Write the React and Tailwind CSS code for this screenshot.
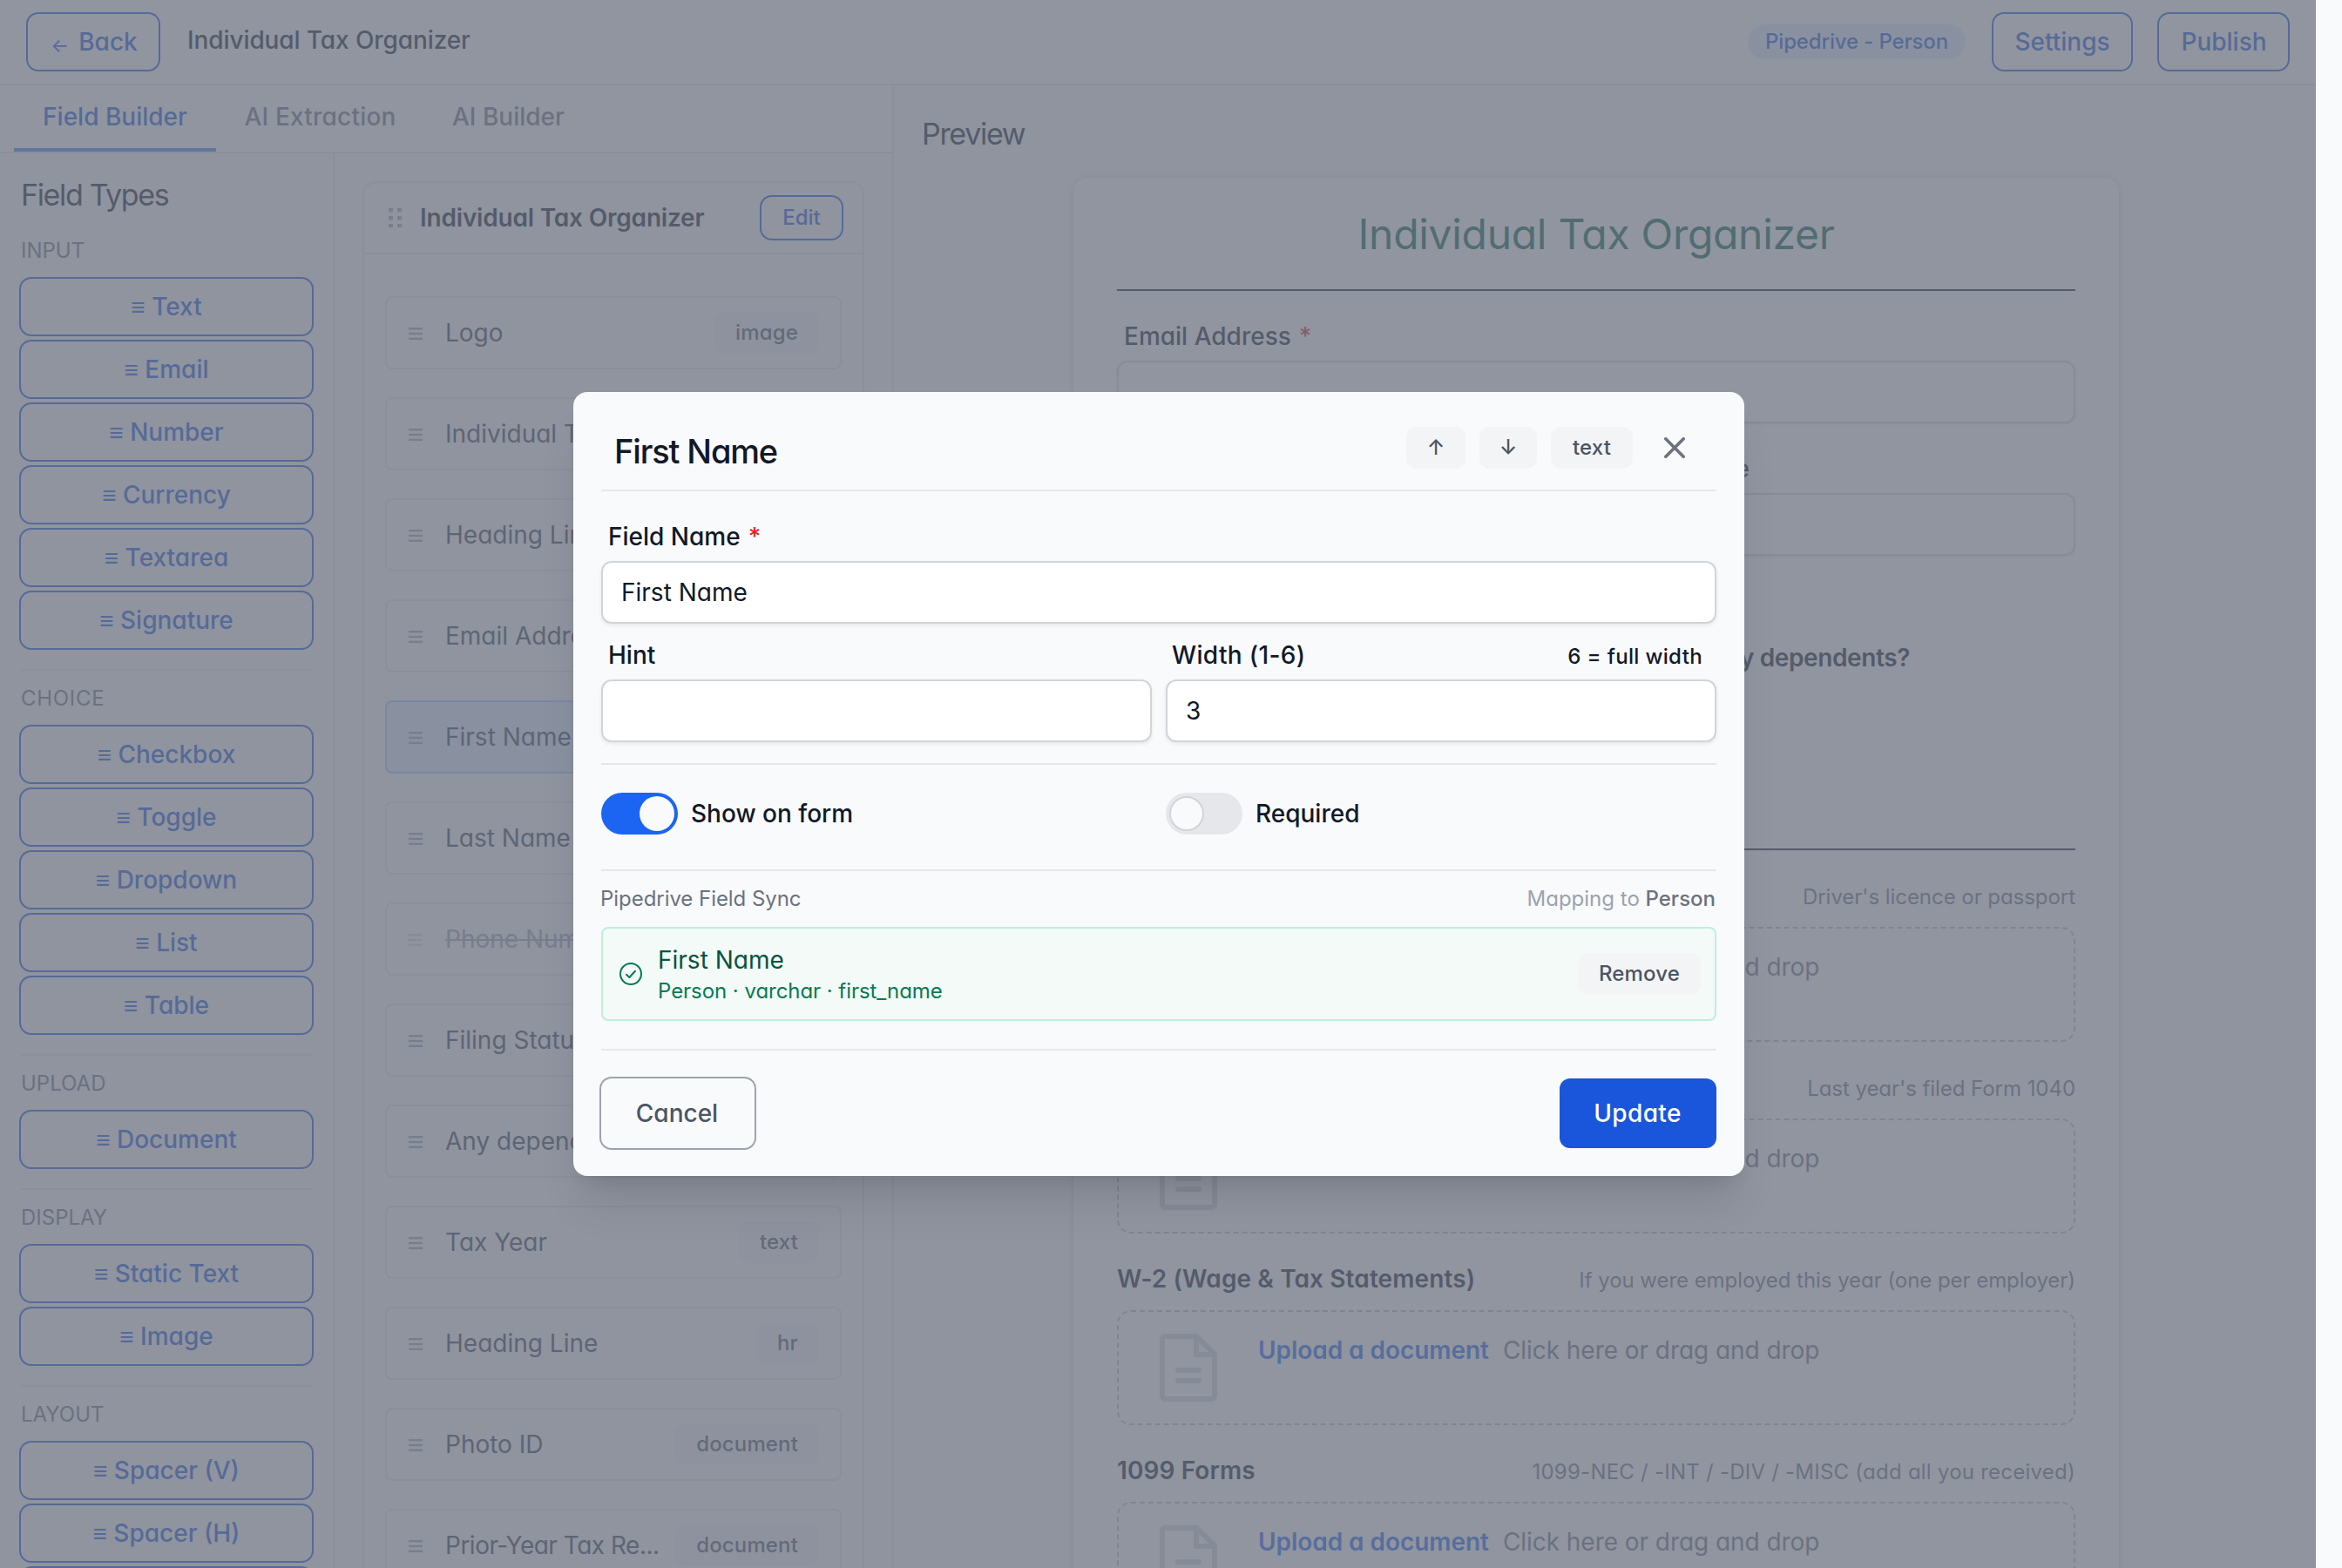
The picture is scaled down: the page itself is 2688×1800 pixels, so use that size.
import React from 'react';

const fieldGroups = [
  { title: 'INPUT', items: ['Text', 'Email', 'Number', 'Currency', 'Textarea', 'Signature'] },
  { title: 'CHOICE', items: ['Checkbox', 'Toggle', 'Dropdown', 'List', 'Table'] },
  { title: 'UPLOAD', items: ['Document'] },
  { title: 'DISPLAY', items: ['Static Text', 'Image'] },
  { title: 'LAYOUT', items: ['Spacer (V)', 'Spacer (H)', 'Divider'] },
];

const formFields = [
  { name: 'Logo', type: 'image' },
  { name: 'Individual Tax Organizer', type: 'text' },
  { name: 'Heading Line', type: 'hr' },
  { name: 'Email Address', type: 'email' },
  { name: 'First Name', type: 'text', active: true },
  { name: 'Last Name', type: 'text' },
  { name: 'Phone Number', type: 'text', hidden: true },
  { name: 'Filing Status', type: 'list' },
  { name: 'Any dependents?', type: 'toggle' },
  { name: 'Tax Year', type: 'text' },
  { name: 'Heading Line', type: 'hr' },
  { name: 'Photo ID', type: 'document' },
  { name: 'Prior-Year Tax Re...', type: 'document', long: true },
];

const uploads = [
  { label: 'Photo ID', hint: "Driver's licence or passport" },
  { label: 'Prior-Year Tax Return', hint: "Last year's filed Form 1040" },
  { label: 'W-2 (Wage & Tax Statements)', hint: 'If you were employed this year (one per employer)' },
  { label: '1099 Forms', hint: '1099-NEC / -INT / -DIV / -MISC (add all you received)', wide: true },
];

export default function App() {
  return (
    <div className="relative h-[1800px] w-[2688px] overflow-hidden bg-[#f9fafb] font-['Inter',sans-serif] text-[28px] leading-10 text-[#111928] [font-feature-settings:'cv11']">
      <div className="flex h-full w-[2658px] flex-col">
        <TopBar />
        <div className="flex min-h-0 flex-1">
          <div className="flex w-[1026px] shrink-0 flex-col border-r-2 border-[#e5e7eb]">
            <Tabs />
            <div className="flex min-h-0 flex-1">
              <Sidebar />
              <FieldList />
            </div>
          </div>
          <Preview />
        </div>
      </div>

      {/* Backdrop + modal */}
      <div className="absolute inset-y-0 left-0 flex w-[2658px] items-center justify-center bg-[#6b7280]/75 pl-0.5">
        <FieldModal />
      </div>
    </div>
  );
}

function TopBar() {
  return (
    <header className="flex h-[98px] shrink-0 items-center border-b-2 border-[#e5e7eb] bg-white pr-8 pl-8">
      <button className="flex h-16 w-[150px] items-center justify-center rounded-xl font-medium text-[#1a56db] ring-2 ring-[#1a56db]">
        <span className="mr-[11px] ml-0.5 pt-2 text-[22px] font-normal">←</span>Back
      </button>
      <h1 className="ml-[33px] pb-1 font-medium tracking-[-0.1px]">Individual Tax Organizer</h1>
      <span className="ml-auto flex h-10 w-[250px] items-center justify-center rounded-full bg-[#e1effe] text-2xl font-medium tracking-[-0.15px] text-[#1a56db]">
        Pipedrive - Person
      </span>
      <button className="ml-8 h-16 w-[158px] rounded-xl font-medium text-[#1a56db] ring-2 ring-[#1a56db]">Settings</button>
      <button className="ml-8 h-16 w-[148px] rounded-xl pl-px font-medium text-[#1a56db] ring-2 ring-[#1a56db]">Publish</button>
    </header>
  );
}

function Tabs() {
  return (
    <nav className="flex h-[78px] shrink-0 border-b-2 border-[#e5e7eb] bg-white pl-4 font-medium text-[#6b7280]">
      <span className="w-[232px] border-b-4 border-[#3f83f8] pt-4 text-center text-[#1a56db]">Field Builder</span>
      <span className="w-[238px] pt-4 pl-px text-center tracking-[0.2px]">AI Extraction</span>
      <span className="pt-4 pl-[33px]">AI Builder</span>
    </nav>
  );
}

function Sidebar() {
  return (
    <aside className="w-[384px] shrink-0 overflow-hidden border-r-2 border-[#e5e7eb] pt-6 pr-6 pl-6">
      <h2 className="text-[34px] leading-[48px] tracking-[-1.35px]">Field Types</h2>
      <div className="mt-[7px] flex flex-col gap-6">
        {fieldGroups.map((group, index) => (
          <div key={group.title} className={index > 0 ? 'border-t-2 border-[#e5e7eb] pt-4' : 'pt-[17px]'}>
            <h3 className={`text-2xl leading-8 text-[#6b7280] ${group.title === 'CHOICE' ? 'tracking-[0.7px]' : ''}`}>{group.title}</h3>
            <div className="mt-4 flex flex-col gap-2">
              {group.items.map((item) => (
                <button key={item} className="h-16 rounded-xl font-medium text-[#1a56db] ring-2 ring-[#1a56db]">
                  ≡ {item}
                </button>
              ))}
            </div>
          </div>
        ))}
      </div>
    </aside>
  );
}

function FieldList() {
  return (
    <div className="min-h-0 flex-1 overflow-hidden px-8 pt-8">
      <div className="h-[1700px] rounded-2xl border-2 border-[#e5e7eb]">
        <div className="flex h-[82px] items-center border-b-2 border-[#e5e7eb] pr-6 pl-7">
          <Grip />
          <h2 className="ml-[21px] font-semibold tracking-[-0.2px]">Individual Tax Organizer</h2>
          <button className="ml-auto h-12 w-[92px] rounded-xl text-2xl font-medium text-[#1a56db] ring-2 ring-[#1a56db]">
            Edit
          </button>
        </div>
        <div className="flex flex-col gap-8 px-6 pt-12">
          {formFields.map((field, index) => (
            <FieldRow key={index} field={field} />
          ))}
        </div>
      </div>
    </div>
  );
}

function FieldRow({ field }) {
  const box = field.active ? 'border-[#a4cafe] bg-[#e1effe]' : 'border-[#e5e7eb]';
  return (
    <div className={`flex h-[84px] items-center rounded-lg border-2 pr-6 pl-[25px] ${box}`}>
      <span className={field.hidden ? 'w-[42px] text-[#d1d5db]' : 'w-[42px] text-[#9ca3af]'}>
        <Bars />
      </span>
      <span
        className={`whitespace-nowrap ${field.hidden ? 'text-[#9ca3af] line-through' : 'text-[#374151]'} ${field.long ? 'tracking-[-0.5px]' : ''}`}
      >
        {field.name}
      </span>
      <Badge className="ml-auto px-6">{field.type}</Badge>
    </div>
  );
}

function Badge({ children, className = '' }) {
  return (
    <span className={`flex h-12 shrink-0 items-center rounded-xl bg-[#f3f4f6] text-2xl font-medium tracking-[0.15px] text-[#4b5563] ${className}`}>
      {children}
    </span>
  );
}

function Preview() {
  return (
    <main className="min-w-0 flex-1 overflow-hidden pt-8 pl-8">
      <h2 className="text-[34px] leading-[48px] tracking-[-1.3px]">Preview</h2>
      <div className="mt-[26px] ml-[174px] h-[1700px] w-[1200px] rounded-2xl bg-white px-[50px] pt-9 shadow-[0_0_6px_rgba(0,0,0,0.16)]">
        <h1 className="h-14 pt-px text-center text-[48px] leading-14 tracking-[-0.3px] text-[#065f46]">Individual Tax Organizer</h1>
        <hr className="mt-9 border-t-2 border-[#111928]" />
        <PreviewInput label="Email Address" required />
        <div className="grid grid-cols-2 gap-4">
          <PreviewInput label="First Name" />
          <PreviewInput label="Last Name" indent />
        </div>
        <div className="flex h-[336px] justify-between pt-[97px] pr-[190px] font-semibold tracking-[-0.4px]">
          <span>Filing Status</span>
          <span>Any dependents?</span>
        </div>
        <hr className="border-t-2 border-[#111928]" />
        {uploads.map((upload) => (
          <UploadField key={upload.label} {...upload} />
        ))}
      </div>
    </main>
  );
}

function PreviewInput({ label, required, indent }) {
  return (
    <div className="pt-8">
      <label className={`block font-medium ${indent ? 'pl-[23px]' : 'pl-2'}`}>
        {label}
        {required && <span className="ml-[9px] text-[#e02424]">*</span>}
      </label>
      <div className="mt-2 h-[72px] rounded-xl border-2 border-[#d1d5db] bg-white shadow-sm" />
    </div>
  );
}

function UploadField({ label, hint, wide }) {
  return (
    <div className="pt-8">
      <div className="flex items-baseline justify-between">
        <span className="font-semibold tracking-[0.1px]">{label}</span>
        <span className={`text-2xl leading-8 text-[#6b7280] ${wide ? 'tracking-[0.24px]' : 'tracking-[-0.05px]'}`}>{hint}</span>
      </div>
      <div className="mt-4 flex h-[132px] rounded-2xl border-2 border-dashed border-[#b8bdc7] pt-[25px] pl-[47px]">
        <DocumentIcon />
        <p className="-mt-px ml-[47px] tracking-[-0.05px] text-[#6b7280]">
          <span className="mr-4 font-semibold text-[#1c64f2]">Upload a document</span>
          Click here or drag and drop
        </p>
      </div>
    </div>
  );
}

function FieldModal() {
  return (
    <div className="h-[900px] w-[1344px] rounded-2xl bg-[#f9fafb] px-8 shadow-[0_40px_50px_-10px_rgb(0_0_0/0.1),0_16px_20px_-12px_rgb(0_0_0/0.1)]">
      <div className="flex h-[114px] items-center border-b-2 border-[#e5e7eb] pt-2 pr-9 pl-[15px]">
        <h2 className="mt-4 text-[38px] font-medium tracking-[-1.15px]">First Name</h2>
        <div className="mt-2 ml-auto flex items-center">
          <Badge className="w-[68px] justify-center">↑</Badge>
          <Badge className="ml-4 w-[66px] justify-center">↓</Badge>
          <Badge className="ml-4 w-[94px] justify-center">text</Badge>
        </div>
        <svg className="mt-2 ml-9 h-6 w-6" viewBox="0 0 24 24" fill="none" stroke="#6b7280" strokeWidth="3.6" strokeLinecap="round">
          <path d="M1.8 1.8l20.4 20.4M22.2 1.8L1.8 22.2" />
        </svg>
      </div>

      <label className="mt-8 block pl-2 font-medium">
        Field Name<span className="ml-[9px] text-[#e02424]">*</span>
      </label>
      <ModalInput value="First Name" />

      <div className="mt-4 grid grid-cols-2 gap-4">
        <div>
          <label className="block pl-2 font-medium">Hint</label>
          <ModalInput />
        </div>
        <div>
          <div className="flex items-baseline justify-between pr-4 pl-[7px] font-medium">
            <label className="tracking-[0.35px]">Width (1-6)</label>
            <span className="text-2xl leading-8 tracking-[0.35px]">6 = full width</span>
          </div>
          <ModalInput value="3" />
        </div>
      </div>

      <div className="mt-6 grid h-[124px] grid-cols-2 gap-4 border-y-2 border-[#e5e7eb] pt-8">
        <Toggle label="Show on form" checked />
        <Toggle label="Required" />
      </div>

      <div className="flex items-center justify-between pt-4 text-2xl leading-8 text-[#6b7280]">
        <span className="-ml-px tracking-[-0.05px]">Pipedrive Field Sync</span>
        <span className="pr-px text-[#9ca3af]">
          Mapping to <span className="font-medium text-[#6b7280]">Person</span>
        </span>
      </div>
      <div className="mt-4 flex h-[108px] items-center rounded-lg border-2 border-[#bcf0da] bg-[#f3faf7] pr-4 pl-[19px]">
        <svg className="h-[26px] w-[26px]" viewBox="0 0 26 26" fill="none" stroke="#057a55" strokeWidth="2" strokeLinecap="round" strokeLinejoin="round">
          <circle cx="13" cy="13" r="12" />
          <path d="M8 13.8l3.4 3.2L18 9.8" />
        </svg>
        <div className="ml-[18px] pt-[3px]">
          <div className="leading-9 text-[#03543f]">First Name</div>
          <div className="text-2xl leading-9 tracking-[-0.05px] text-[#057a55]">Person · varchar · first_name</div>
        </div>
        <Badge className="ml-auto px-6">Remove</Badge>
      </div>

      <div className="mt-8 flex justify-between border-t-2 border-[#e5e7eb] pt-8">
        <button className="h-20 w-44 rounded-xl pr-0.5 font-medium text-[#4b5563] ring-2 ring-[#9ca3af]">Cancel</button>
        <button className="h-20 w-[180px] rounded-xl bg-[#1a56db] pr-px font-medium tracking-[0.35px] text-white">Update</button>
      </div>
    </div>
  );
}

function ModalInput({ value }) {
  return (
    <div className="mt-2 flex h-[72px] items-center rounded-xl border-2 border-[#d1d5db] bg-white px-[21px] shadow-[0_2px_4px_rgba(0,0,0,0.08)]">
      {value}
    </div>
  );
}

function Toggle({ label, checked }) {
  return (
    <div className="flex h-12 items-center font-medium">
      <span className={`flex h-12 w-[88px] items-center rounded-full px-1 ${checked ? 'justify-end bg-[#1c64f2]' : 'bg-[#e5e7eb]'}`}>
        <span className={checked ? 'h-10 w-10 rounded-full bg-[#f9fafb]' : 'h-10 w-10 rounded-full border-2 border-[#d1d5db] bg-[#f9fafb]'} />
      </span>
      <span className="ml-[15px]">{label}</span>
    </div>
  );
}

function Grip() {
  return (
    <svg className="h-[22px] w-[15px]" viewBox="0 0 15 22" fill="#9ca3af">
      {[0, 9, 18].map((y) => (
        <React.Fragment key={y}>
          <rect x="0" y={y} width="5" height="4.4" />
          <rect x="10" y={y} width="5" height="4.4" />
        </React.Fragment>
      ))}
    </svg>
  );
}

function Bars() {
  return (
    <svg className="mt-0.5 h-[14px] w-4" viewBox="0 0 16 14" fill="currentColor">
      <rect y="0" width="16" height="2.4" />
      <rect y="5.8" width="16" height="2.4" />
      <rect y="11.6" width="16" height="2.4" />
    </svg>
  );
}

function DocumentIcon() {
  return (
    <svg className="h-[78px] w-[66px]" viewBox="0 0 66 78" fill="none" stroke="#d1d5db" strokeWidth="6">
      <path d="M3 6a3 3 0 0 1 3-3h36.5L63 23.5V72a3 3 0 0 1-3 3H6a3 3 0 0 1-3-3z" />
      <path d="M42 3v21h21" />
      <path d="M21 42h24M21 54h24" strokeLinecap="round" />
    </svg>
  );
}
